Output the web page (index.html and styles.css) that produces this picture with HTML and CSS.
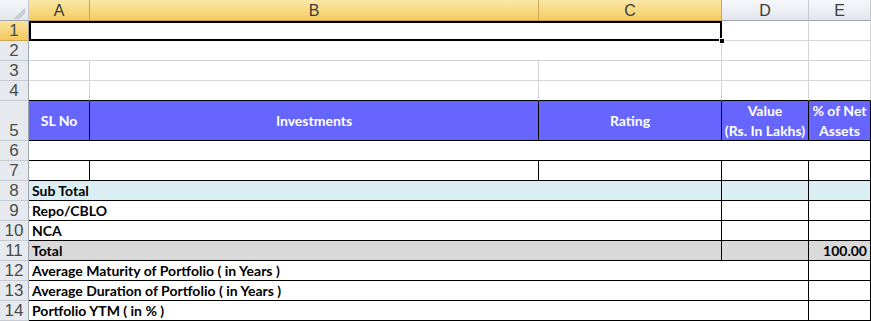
FILE: index.html
```html
<!DOCTYPE html>
<html lang="en">
<head>
  <meta charset="UTF-8" />
  <title>Portfolio Sheet</title>
  <link rel="stylesheet" href="styles.css">
</head>
<body>

  <div class="sheet">
    <!-- column headers -->
    <div class="corner"></div>
    <div class="colhead sel">A</div>
    <div class="colhead sel">B</div>
    <div class="colhead sel">C</div>
    <div class="colhead">D</div>
    <div class="colhead">E</div>

    <!-- 1 -->
    <div class="rowhead sel">1</div>
    <div class="cell span3 active"><span class="handle"></span></div>
    <div class="cell"></div>
    <div class="cell"></div>

    <!-- 2 -->
    <div class="rowhead">2</div>
    <div class="cell span3"></div>
    <div class="cell"></div>
    <div class="cell"></div>

    <!-- 3 -->
    <div class="rowhead">3</div>
    <div class="cell"></div>
    <div class="cell"></div>
    <div class="cell"></div>
    <div class="cell"></div>
    <div class="cell"></div>

    <!-- 4 -->
    <div class="rowhead">4</div>
    <div class="cell edge"></div>
    <div class="cell edge"></div>
    <div class="cell edge"></div>
    <div class="cell edge"></div>
    <div class="cell edge"></div>

    <!-- 5 -->
    <div class="rowhead">5</div>
    <div class="cell box th">SL No</div>
    <div class="cell box th">Investments</div>
    <div class="cell box th">Rating</div>
    <div class="cell box th">Value<br>(Rs. In Lakhs)</div>
    <div class="cell box th">% of Net<br>Assets</div>

    <!-- 6 -->
    <div class="rowhead">6</div>
    <div class="cell box span5"></div>

    <!-- 7 -->
    <div class="rowhead">7</div>
    <div class="cell box"></div>
    <div class="cell box"></div>
    <div class="cell box"></div>
    <div class="cell box"></div>
    <div class="cell box"></div>

    <!-- 8 -->
    <div class="rowhead">8</div>
    <div class="cell box span3 sub">Sub Total</div>
    <div class="cell box sub"></div>
    <div class="cell box sub"></div>

    <!-- 9 -->
    <div class="rowhead">9</div>
    <div class="cell box span3">Repo/CBLO</div>
    <div class="cell box"></div>
    <div class="cell box"></div>

    <!-- 10 -->
    <div class="rowhead">10</div>
    <div class="cell box span3">NCA</div>
    <div class="cell box"></div>
    <div class="cell box"></div>

    <!-- 11 -->
    <div class="rowhead">11</div>
    <div class="cell box span3 total">Total</div>
    <div class="cell box total"></div>
    <div class="cell box total num">100.00</div>

    <!-- 12 -->
    <div class="rowhead">12</div>
    <div class="cell box span4">Average Maturity of Portfolio ( in Years )</div>
    <div class="cell box"></div>

    <!-- 13 -->
    <div class="rowhead">13</div>
    <div class="cell box span4">Average Duration of Portfolio ( in Years )</div>
    <div class="cell box"></div>

    <!-- 14 -->
    <div class="rowhead">14</div>
    <div class="cell box span4">Portfolio YTM ( in % )</div>
    <div class="cell box"></div>
  </div>

</body>
</html>
```

FILE: styles.css
```css
:root {
  --grid: #d4d4d4;
  --head-line: #c5cad1;
  --head-edge: #9ea5af;
  --blue: #6666ff;
}

* {
  box-sizing: border-box;
}

body {
  margin: 0;
  background: #fff;
  overflow: hidden;
}

.sheet {
  display: grid;
  grid-template-columns: 29px 61px 449px 183px 87px 62px;
  grid-template-rows: 21px repeat(4, 20px) 40px repeat(9, 20px);
  width: 871px;
}

.corner {
  background: linear-gradient(135deg, transparent 55%, #c9cdd3 55%, #c9cdd3 78%, transparent 78%), linear-gradient(#f4f6f9, #e3e7ec);
  background-size: 13px 13px, 100% 100%;
  background-position: 12px 6px, 0 0;
  background-repeat: no-repeat;
  border-right: 1px solid var(--head-line);
  border-bottom: 1px solid var(--head-edge);
}

.colhead {
  background: linear-gradient(#f6f8fb, #e2e6eb);
  border-right: 1px solid var(--head-line);
  border-bottom: 1px solid var(--head-edge);
  font-family: "Liberation Sans", Arial, sans-serif;
  font-size: 16px;
  color: #3c3c3c;
  display: flex;
  align-items: center;
  justify-content: center;
  padding-top: 1px;
}

.colhead.sel {
  background: linear-gradient(#fbe7a6, #f6cd62);
  border-right-color: #d0a550;
  border-bottom-color: #c49a4c;
}

.rowhead {
  background: #e6eaef;
  border-right: 1px solid var(--head-edge);
  border-bottom: 1px solid var(--head-line);
  font-family: "Liberation Sans", Arial, sans-serif;
  font-size: 17px;
  color: #4a4a4a;
  display: flex;
  align-items: flex-end;
  justify-content: center;
  line-height: 19px;
}

.rowhead.sel {
  background: linear-gradient(#fbe3a0, #f5c95d);
  border-bottom-color: #d0a550;
}

.cell {
  border-right: 1px solid var(--grid);
  border-bottom: 1px solid var(--grid);
  font-family: Lato, "Open Sans", sans-serif;
  font-weight: bold;
  font-size: 14px;
  color: #000;
  display: flex;
  align-items: center;
  padding: 0 3px 1px;
  white-space: nowrap;
  position: relative;
}

.edge {
  border-bottom-color: #000;
}

.box {
  border-right-color: #000;
  border-bottom-color: #000;
}

.span3 {
  grid-column: span 3;
}

.span4 {
  grid-column: span 4;
}

.span5 {
  grid-column: span 5;
}

.th {
  background: var(--blue);
  color: #fff;
  justify-content: center;
  text-align: center;
  line-height: 20px;
  padding: 0;
}

.sub {
  background: #daeef3;
}

.total {
  background: #d9d9d9;
}

.num {
  justify-content: flex-end;
}

.active::after {
  content: "";
  position: absolute;
  top: 0;
  left: 0;
  right: -1px;
  bottom: -1px;
  border: 2px solid #000;
}

.handle {
  position: absolute;
  right: -4px;
  bottom: -4px;
  width: 6px;
  height: 6px;
  background: #000;
  border: 1px solid #fff;
  z-index: 1;
}
```
